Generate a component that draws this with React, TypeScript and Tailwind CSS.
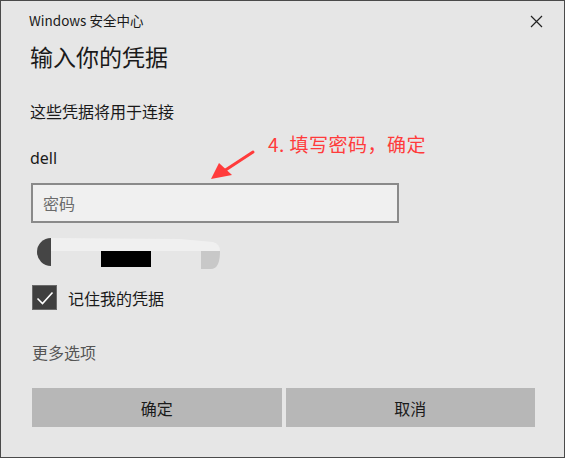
export default function App() {
  return (
    <div className="relative w-[565px] h-[458px] bg-[#e6e6e6] border border-[#4a4a4a] text-[#1a1a1a] font-['Noto_Sans_CJK_SC','Noto_Sans',sans-serif] overflow-hidden">
      {/* title bar */}
      <div className="flex items-center justify-between h-[40px] pl-[28px] pr-[21px]">
        <span className="text-[13.5px] leading-none">Windows 安全中心</span>
        <svg width="13" height="13" viewBox="0 0 13 13" className="text-[#222]">
          <path d="M1 1L12 12M12 1L1 12" stroke="currentColor" strokeWidth="1.2" />
        </svg>
      </div>

      <div className="pl-[29px] pr-[30px]">
        <h1 className="text-[23px] leading-[30px]">输入你的凭据</h1>

        <p className="text-[16px] leading-[20px] mt-[30px]">这些凭据将用于连接</p>
        <p className="text-[16px] leading-[20px] mt-[27px] font-['Noto_Sans',sans-serif]">dell</p>

        {/* password box */}
        <div className="mt-[15px] w-[368px] h-[40px] ml-[1px] border-2 border-[#8a8a8a] bg-[#f0f0f0] flex items-center px-[10px]">
          <span className="text-[16px] text-[#6b6b6b]">密码</span>
        </div>

        {/* redacted account blob */}
        <svg width="192" height="34" viewBox="0 0 192 34" className="mt-[14px] block">
          <path d="M21 1 L150 2 L183 5 Q190 7 190 14 L190 14 L21 14 Z" fill="#f0f0f0" />
          <path d="M21 1 A14 14 0 0 0 21 29 Z" fill="#454545" />
          <rect x="71" y="14" width="50" height="16" fill="#000" />
          <path d="M171 14 L190 14 Q190 32 181 32 L171 32 Z" fill="#c8c8c8" />
        </svg>

        {/* remember */}
        <div className="flex items-center mt-[14px] ml-[2px]">
          <div className="w-[25px] h-[25px] bg-[#3f3f3f] border border-[#6a6a6a] flex items-center justify-center">
            <svg width="18" height="14" viewBox="0 0 18 14">
              <path d="M1.5 7.5L6.5 12.5L16.5 1.5" stroke="#fff" strokeWidth="1.6" fill="none" />
            </svg>
          </div>
          <span className="text-[16px] ml-[11px]">记住我的凭据</span>
        </div>

        <p className="text-[16px] leading-[20px] text-[#555] mt-[32px] ml-[2px]">更多选项</p>

        {/* buttons */}
        <div className="grid grid-cols-2 gap-[4px] mt-[26px] ml-[2px] w-[503px]">
          <button className="h-[39px] bg-[#b7b7b7] text-[16px]">确定</button>
          <button className="h-[39px] bg-[#b7b7b7] text-[16px]">取消</button>
        </div>
      </div>

      {/* annotation overlay */}
      <span className="absolute left-[267px] top-[129px] text-[19px] text-[#ff3b3b] tracking-[0.5px]">
        4. 填写密码，确定
      </span>
      <svg width="50" height="34" viewBox="0 0 50 34" className="absolute left-[206px] top-[147px]">
        <path d="M46 4 L17 23" stroke="#ff3b3b" strokeWidth="3" strokeLinecap="round" />
        <path d="M4 31 L12 15 L25 27 Z" fill="#ff3b3b" />
      </svg>
    </div>
  );
}
